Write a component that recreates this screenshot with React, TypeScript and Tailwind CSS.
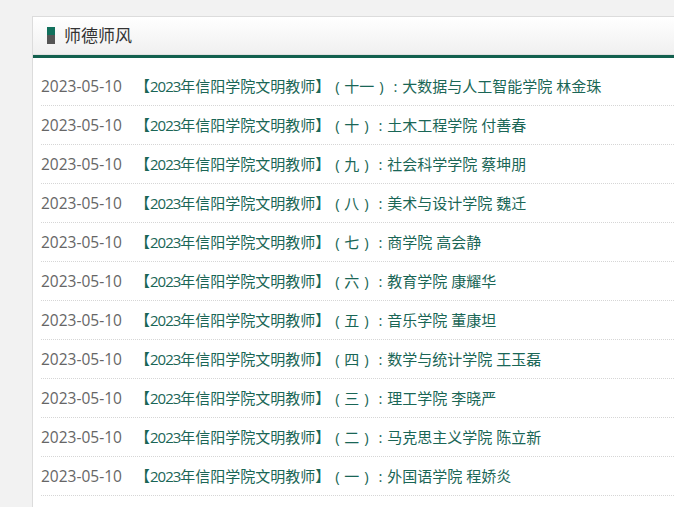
import React from "react";

const items = [
  ["十一", "大数据与人工智能学院 林金珠"],
  ["十", "土木工程学院 付善春"],
  ["九", "社会科学学院 蔡坤朋"],
  ["八", "美术与设计学院 魏迁"],
  ["七", "商学院 高会静"],
  ["六", "教育学院 康耀华"],
  ["五", "音乐学院 董康坦"],
  ["四", "数学与统计学院 王玉磊"],
  ["三", "理工学院 李晓严"],
  ["二", "马克思主义学院 陈立新"],
  ["一", "外国语学院 程娇炎"],
];

function P({ c }: { c: string }) {
  return <span className="inline-block w-[14px] text-center">{c}</span>;
}

export default function App() {
  return (
    <div
      className="w-[674px] h-[507px] overflow-hidden bg-[#f2f2f2] pt-[16px] pl-[32px]"
      style={{ fontFamily: '"Open Sans", "Noto Sans CJK SC", sans-serif' }}
    >
      <div className="w-[700px] h-[600px] bg-white border-t border-l border-[#dcdcdc]">
        <div className="h-[38px] flex items-center pl-[14px] bg-gradient-to-b from-white to-[#f0f0f0] border-b border-[#e2e2e2]">
          <div className="w-[8px] h-[17px] flex flex-col mr-[9px]">
            <div className="h-[8px] bg-[#11705c]" />
            <div className="h-[9px] bg-[#555555]" />
          </div>
          <span className="text-[17px] text-[#333] leading-none">师德师风</span>
        </div>
        <div className="h-[3px] bg-[#13614f]" />
        <ul className="pt-[9px] pl-[8px] w-[641px]">
          {items.map(([n, t], i) => (
            <li
              key={i}
              className="h-[39px] leading-[38px] border-b border-dotted border-[#d6d6d6] text-[15px] whitespace-nowrap"
            >
              <span className="inline-block text-[#666] text-[15.5px] w-[94px]">2023-05-10</span>
              <span className="text-[#1a6656]">
                【<span className="tracking-[-1px]">2023</span>年信阳学院文明教师】<P c="(" />{n}<P c=")" /><P c=":" />{t}
              </span>
            </li>
          ))}
        </ul>
      </div>
    </div>
  );
}
